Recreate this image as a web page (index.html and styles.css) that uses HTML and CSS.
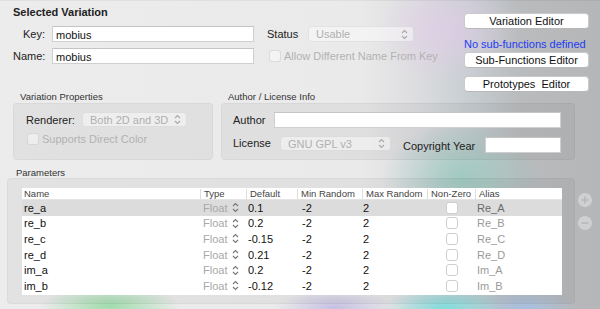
FILE: index.html
```html
<!DOCTYPE html>
<html>
<head>
<meta charset="utf-8">
<title>Variation</title>
<link rel="stylesheet" href="styles.css">
</head>
<body>
<div class="window">
  <div class="top">
    <div class="selected">
      <div class="title">Selected Variation</div>
      <div class="form">
        <div class="lbl">Key:</div>
        <div class="input">mobius</div>
        <div class="lbl lbl-status">Status</div>
        <div class="popup popup-status"><span>Usable</span><svg class="updown" viewBox="0 0 7 11" width="7" height="11"><path d="M1 4 L3.5 1.5 L6 4 M1 7 L3.5 9.5 L6 7" fill="none" stroke="#a8a8a8" stroke-width="1.1"/></svg></div>
        <div class="lbl">Name:</div>
        <div class="input">mobius</div>
        <div class="check check-allow"><span class="cbox"></span>Allow Different Name From Key</div>
      </div>
    </div>
    <div class="side">
      <div class="btn">Variation Editor</div>
      <div class="note">No sub-functions defined</div>
      <div class="btn">Sub-Functions Editor</div>
      <div class="btn btn-proto">Prototypes&nbsp; Editor</div>
    </div>
  </div>

  <div class="mid">
    <div class="group group-vp">
      <div class="glabel">Variation Properties</div>
      <div class="gbox vp-box">
        <div class="row">
          <div class="rlbl">Renderer:</div>
          <div class="popup popup-render"><span>Both 2D and 3D</span><svg class="updown" viewBox="0 0 7 11" width="7" height="11"><path d="M1 4 L3.5 1.5 L6 4 M1 7 L3.5 9.5 L6 7" fill="none" stroke="#a8a8a8" stroke-width="1.1"/></svg></div>
        </div>
        <div class="check check-direct"><span class="cbox"></span>Supports Direct Color</div>
      </div>
    </div>
    <div class="group group-author">
      <div class="glabel">Author / License Info</div>
      <div class="gbox author-box">
        <div class="row">
          <div class="alabel">Author</div>
          <div class="input input-author"></div>
        </div>
        <div class="row row-license">
          <div class="llabel">License</div>
          <div class="popup popup-license"><span>GNU GPL v3</span><svg class="updown" viewBox="0 0 7 11" width="7" height="11"><path d="M1 4 L3.5 1.5 L6 4 M1 7 L3.5 9.5 L6 7" fill="none" stroke="#a8a8a8" stroke-width="1.1"/></svg></div>
          <div class="clabel">Copyright Year</div>
          <div class="input input-year"></div>
        </div>
      </div>
    </div>
  </div>

  <div class="plabel">Parameters</div>
  <div class="params">
    <div class="pbox">
      <div class="table">
        <div class="tr head">
          <div class="th c-name">Name</div>
          <div class="th c-type">Type</div>
          <div class="th c-def">Default</div>
          <div class="th c-min">Min Random</div>
          <div class="th c-max">Max Random</div>
          <div class="th c-nz">Non-Zero</div>
          <div class="th c-alias">Alias</div>
        </div>
        <div class="tr sel">
          <div class="td c-name">re_a</div>
          <div class="td c-type"><span class="ftype">Float</span><svg class="updown dark" viewBox="0 0 7 11" width="7" height="11"><path d="M1 4 L3.5 1.5 L6 4 M1 7 L3.5 9.5 L6 7" fill="none" stroke="#777" stroke-width="1.1"/></svg></div>
          <div class="td c-def">0.1</div>
          <div class="td c-min">-2</div>
          <div class="td c-max">2</div>
          <div class="td c-nz"><span class="tbox"></span></div>
          <div class="td c-alias alias-sel">Re_A</div>
        </div>
        <div class="tr">
          <div class="td c-name">re_b</div>
          <div class="td c-type"><span class="ftype">Float</span><svg class="updown dark" viewBox="0 0 7 11" width="7" height="11"><path d="M1 4 L3.5 1.5 L6 4 M1 7 L3.5 9.5 L6 7" fill="none" stroke="#777" stroke-width="1.1"/></svg></div>
          <div class="td c-def">0.2</div>
          <div class="td c-min">-2</div>
          <div class="td c-max">2</div>
          <div class="td c-nz"><span class="tbox"></span></div>
          <div class="td c-alias">Re_B</div>
        </div>
        <div class="tr">
          <div class="td c-name">re_c</div>
          <div class="td c-type"><span class="ftype">Float</span><svg class="updown dark" viewBox="0 0 7 11" width="7" height="11"><path d="M1 4 L3.5 1.5 L6 4 M1 7 L3.5 9.5 L6 7" fill="none" stroke="#777" stroke-width="1.1"/></svg></div>
          <div class="td c-def">-0.15</div>
          <div class="td c-min">-2</div>
          <div class="td c-max">2</div>
          <div class="td c-nz"><span class="tbox"></span></div>
          <div class="td c-alias">Re_C</div>
        </div>
        <div class="tr">
          <div class="td c-name">re_d</div>
          <div class="td c-type"><span class="ftype">Float</span><svg class="updown dark" viewBox="0 0 7 11" width="7" height="11"><path d="M1 4 L3.5 1.5 L6 4 M1 7 L3.5 9.5 L6 7" fill="none" stroke="#777" stroke-width="1.1"/></svg></div>
          <div class="td c-def">0.21</div>
          <div class="td c-min">-2</div>
          <div class="td c-max">2</div>
          <div class="td c-nz"><span class="tbox"></span></div>
          <div class="td c-alias">Re_D</div>
        </div>
        <div class="tr">
          <div class="td c-name">im_a</div>
          <div class="td c-type"><span class="ftype">Float</span><svg class="updown dark" viewBox="0 0 7 11" width="7" height="11"><path d="M1 4 L3.5 1.5 L6 4 M1 7 L3.5 9.5 L6 7" fill="none" stroke="#777" stroke-width="1.1"/></svg></div>
          <div class="td c-def">0.2</div>
          <div class="td c-min">-2</div>
          <div class="td c-max">2</div>
          <div class="td c-nz"><span class="tbox"></span></div>
          <div class="td c-alias">Im_A</div>
        </div>
        <div class="tr">
          <div class="td c-name">im_b</div>
          <div class="td c-type"><span class="ftype">Float</span><svg class="updown dark" viewBox="0 0 7 11" width="7" height="11"><path d="M1 4 L3.5 1.5 L6 4 M1 7 L3.5 9.5 L6 7" fill="none" stroke="#777" stroke-width="1.1"/></svg></div>
          <div class="td c-def">-0.12</div>
          <div class="td c-min">-2</div>
          <div class="td c-max">2</div>
          <div class="td c-nz"><span class="tbox"></span></div>
          <div class="td c-alias">Im_B</div>
        </div>
        <div class="tr tr-peek">
          <div class="td c-name"></div>
          <div class="td c-type"></div>
          <div class="td c-def"></div>
          <div class="td c-min"></div>
          <div class="td c-max"></div>
          <div class="td c-nz"><span class="tbox"></span></div>
          <div class="td c-alias"></div>
        </div>
      </div>
    </div>
    <div class="pm">
      <div class="circ"><svg viewBox="0 0 14 14" width="14" height="14"><path d="M7 3.5 V10.5 M3.5 7 H10.5" stroke="#b8b8b8" stroke-width="1.6"/></svg></div>
      <div class="circ"><svg viewBox="0 0 14 14" width="14" height="14"><path d="M3.5 7 H10.5" stroke="#b8b8b8" stroke-width="1.6"/></svg></div>
    </div>
  </div>
</div>
</body>
</html>
```

FILE: styles.css
```css
* { box-sizing: border-box; }

html, body {
  margin: 0;
  padding: 0;
}

body {
  width: 600px;
  height: 309px;
  overflow: hidden;
  font-family: "Liberation Sans", Arial, sans-serif;
  font-size: 11px;
  color: #1a1a1a;
  background:
    radial-gradient(ellipse 70px 55px at 448px 30px, rgba(224, 204, 232, 0.75), rgba(224, 204, 232, 0) 100%),
    radial-gradient(ellipse 80px 55px at 462px 178px, rgba(150, 200, 188, 0.8), rgba(150, 200, 188, 0) 100%),
    radial-gradient(ellipse 70px 22px at 110px 306px, rgba(160, 220, 172, 1), rgba(160, 220, 172, 0) 100%),
    radial-gradient(ellipse 60px 20px at 335px 308px, rgba(196, 192, 226, 1), rgba(196, 192, 226, 0) 100%),
    radial-gradient(ellipse 60px 22px at 445px 308px, rgba(130, 220, 220, 1), rgba(130, 220, 220, 0) 100%),
    radial-gradient(ellipse 50px 20px at 525px 308px, rgba(168, 192, 224, 1), rgba(168, 192, 224, 0) 100%),
    linear-gradient(90deg, #ececec 0, #eaeaea 360px, #dcdcdf 420px, #c6cdd0 470px, #b9bbbd 520px, #b4b6b8 600px);
}

.window {
  width: 600px;
  height: 309px;
  border-top: 1px solid rgba(0, 0, 0, 0.05);
}

/* ---------- top ---------- */
.top {
  display: flex;
  height: 90px;
}

.selected {
  flex: 0 0 463px;
  padding: 4px 0 0 13px;
}

.title {
  font-weight: bold;
  font-size: 11px;
  line-height: 14px;
  color: #222;
}

.form {
  margin-top: 7px;
  display: grid;
  grid-template-columns: 39px 202px 54px 106px;
  grid-auto-rows: 16px;
  row-gap: 6px;
  align-items: center;
}

.lbl {
  text-align: right;
  padding-right: 7px;
  line-height: 16px;
  color: #222;
}

.lbl-status {
  text-align: left;
  padding: 0 0 0 13px;
}

.input {
  height: 16px;
  line-height: 16px;
  background: #fff;
  border: 1px solid #cfcfcf;
  border-top-color: #c4c4c4;
  padding-left: 3px;
  color: #111;
}

.popup {
  display: flex;
  align-items: center;
  justify-content: space-between;
  height: 16px;
  background: rgba(255, 255, 255, 0.45);
  border: 1px solid rgba(0, 0, 0, 0.07);
  border-radius: 4px;
  padding: 0 5px 0 7px;
  color: #b0b0b0;
}

.check {
  display: flex;
  align-items: center;
  color: #b2b2b2;
  white-space: nowrap;
}

.cbox {
  flex: 0 0 12px;
  width: 12px;
  height: 12px;
  border: 1px solid rgba(0, 0, 0, 0.1);
  background: rgba(255, 255, 255, 0.45);
  border-radius: 3px;
  margin-right: 3px;
}

.check-allow {
  grid-column: 3 / span 2;
  padding-left: 15px;
  overflow: visible;
  width: 200px;
}

/* side buttons */
.side {
  flex: 0 0 127px;
  padding-top: 12px;
  display: flex;
  flex-direction: column;
  align-items: flex-start;
}

.btn {
  width: 125px;
  height: 16px;
  line-height: 14px;
  text-align: center;
  background: #fff;
  border: 1px solid #cacaca;
  border-bottom-color: #b8b8b8;
  border-radius: 4px;
  color: #111;
  margin-left: 1px;
}

.note {
  margin-top: 9px;
  line-height: 12px;
  height: 12px;
  margin-bottom: 2px;
  color: #1e3cf2;
  white-space: nowrap;
  margin-left: 1px;
}

.btn-proto {
  margin-top: 8px;
}

/* ---------- middle ---------- */
.mid {
  display: flex;
  gap: 8px;
  padding-left: 13px;
}

.glabel {
  font-size: 9.5px;
  line-height: 12px;
  height: 12px;
  padding-left: 7px;
  color: #333;
}

.gbox {
  height: 57px;
  background: rgba(0, 0, 0, 0.045);
  border: 1px solid rgba(0, 0, 0, 0.04);
  border-radius: 4px;
}

.group-vp { width: 200px; }
.group-author { width: 354px; }

.vp-box {
  padding: 8px 0 0 12px;
}

.row {
  display: flex;
  align-items: center;
}

.rlbl {
  width: 56px;
  color: #222;
}

.popup-render {
  width: 105px;
  height: 15px;
}

.check-direct {
  margin-top: 6px;
  padding-left: 1px;
}

.author-box {
  padding: 8px 13px 0 11px;
}

.alabel {
  width: 41px;
  color: #222;
}

.input-author {
  flex: 1;
}

.row-license {
  margin-top: 8px;
  align-items: flex-start;
}

.llabel {
  width: 47px;
  line-height: 15px;
  color: #222;
}

.popup-license {
  width: 111px;
  height: 15px;
}

.clabel {
  margin-left: 12px;
  margin-top: 3px;
  line-height: 14px;
  color: #222;
  width: 82px;
}

.input-year {
  width: 76px;
  margin-top: 1px;
}

/* ---------- parameters ---------- */
.plabel {
  margin-top: 7px;
  padding-left: 16px;
  font-size: 9.5px;
  line-height: 11px;
  height: 11px;
  color: #333;
}

.params {
  display: flex;
  padding-left: 7px;
}

.pbox {
  width: 568px;
  height: 126px;
  background: rgba(0, 0, 0, 0.04);
  border: 1px solid rgba(0, 0, 0, 0.035);
  border-radius: 4px;
  padding: 9px 0 0 14px;
}

.table {
  width: 540px;
  height: 107px;
  background: #fff;
  overflow: hidden;
}

.tr {
  display: grid;
  grid-template-columns: 178px 46px 51px 65px 65px 48px 87px;
  height: 15.6px;
  align-items: center;
}

.tr.head {
  height: 12px;
  border-bottom: 1px solid #e4e4e4;
}

.tr.sel {
  background: #dcdcdc;
}

.tr-peek {
  align-items: start;
}

.th {
  font-size: 9.5px;
  line-height: 10px;
  color: #444;
  padding-left: 3px;
  border-left: 1px solid #dedede;
  white-space: nowrap;
}

.th.c-name { border-left: none; padding-left: 2px; }

.td {
  line-height: 14px;
  color: #111;
  white-space: nowrap;
  padding-left: 3px;
}

.td.c-name { padding-left: 2px; }
.td.c-type { padding-left: 3px; display: flex; align-items: center; }
.td.c-def { padding-left: 2px; }
.td.c-min { padding-left: 5px; }
.td.c-max { padding-left: 1px; }
.td.c-nz { padding-left: 19px; display: flex; align-items: center; }
.td.c-alias { padding-left: 2px; color: #9a9a9a; }
.td.alias-sel { color: #6a6a6a; }

.ftype {
  color: #a8a8a8;
}

.updown.dark {
  margin-left: 5px;
}

.tbox {
  flex: 0 0 12px;
  width: 12px;
  height: 12px;
  border: 1px solid #cfcfcf;
  border-radius: 3px;
  background: #fff;
}

.tr-peek .tbox {
  margin-top: 1px;
}

.pm {
  padding: 15px 0 0 3px;
  display: flex;
  flex-direction: column;
  gap: 9px;
}

.circ {
  width: 14px;
  height: 14px;
  border-radius: 50%;
  background: rgba(230, 230, 230, 0.55);
}

.circ svg {
  display: block;
}
```
